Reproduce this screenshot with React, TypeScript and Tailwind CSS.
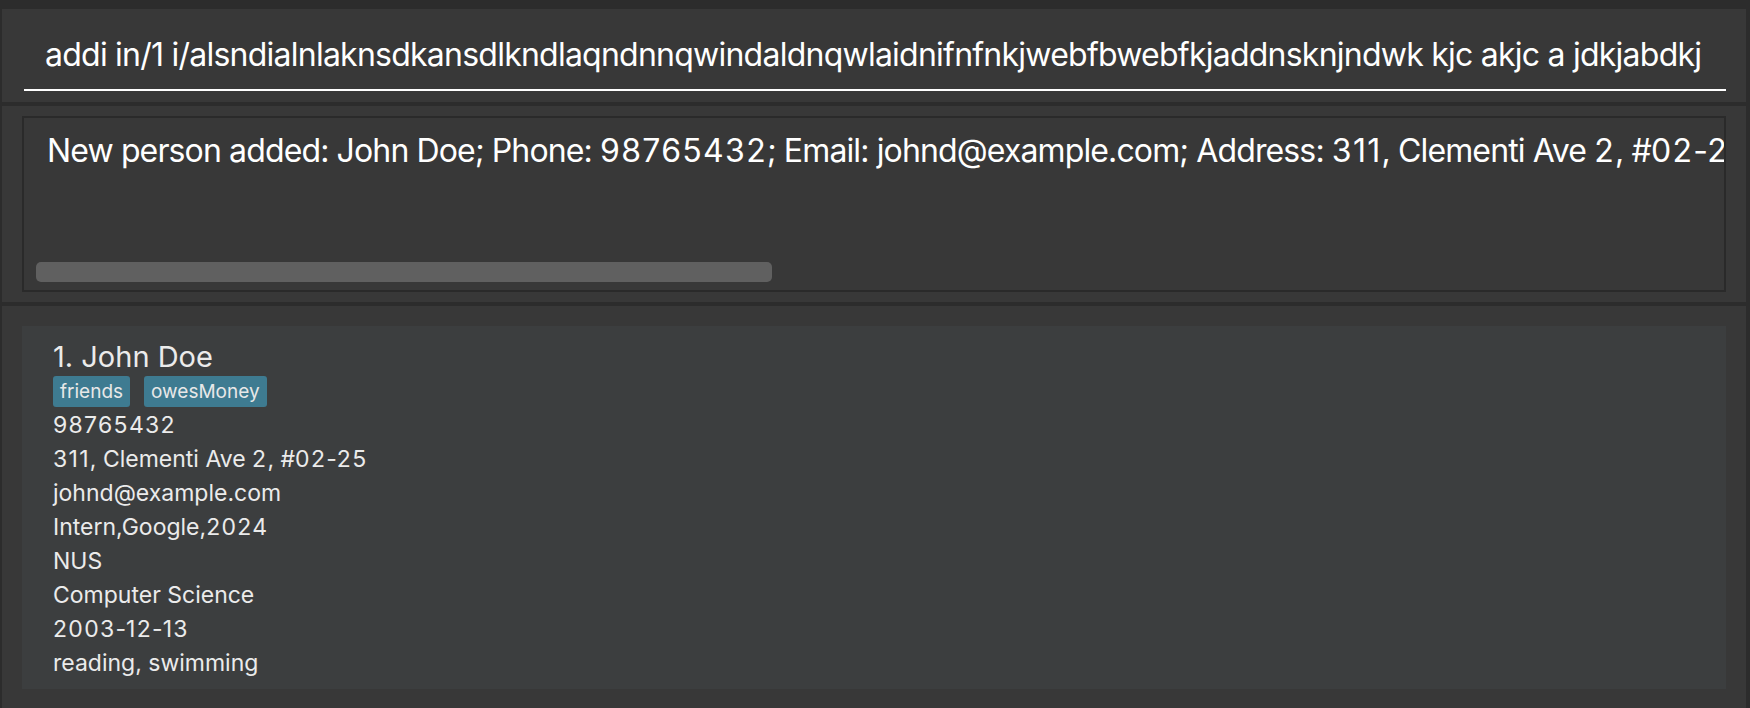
import React from 'react';

const command =
  'addi in/1 i/alsndialnlaknsdkansdlkndlaqndnnqwindaldnqwlaidnifnfnkjwebfbwebfkjaddnsknjndwk kjc akjc a jdkjabdkj';

const result =
  'New person added: John Doe; Phone: 98765432; Email: johnd@example.com; Address: 311, Clementi Ave 2, #02-25; Tags: [friends][owesMoney]';

const details = [
  '98765432',
  '311, Clementi Ave 2, #02-25',
  'johnd@example.com',
  'Intern,Google,2024',
  'NUS',
  'Computer Science',
  '2003-12-13',
  'reading, swimming',
];

const tags = ['friends', 'owesMoney'];

const font = { fontFamily: 'Inter, "Noto Sans", sans-serif' };

// digits in the original font run wider than Inter's
const WideDigits: React.FC<{ text: string }> = ({ text }) => (
  <>
    {text.split(/(\d+)/).map((part, i) =>
      /\d/.test(part) ? (
        <span key={i} className="tracking-[1.3px]">
          {part}
        </span>
      ) : (
        part
      )
    )}
  </>
);

const App: React.FC = () => {
  return (
    <div className="w-[1750px] h-[708px] overflow-hidden bg-[#2c2c2c] pt-[9px] pl-[2px] pr-[4px]" style={font}>
      {/* command box */}
      <div className="h-[93px] bg-[#383838] pl-[22px] pr-[20px] pt-[26px]">
        <div className="h-[56px] border-b-2 border-white pl-[21px] text-[32px] leading-[40px] text-white whitespace-nowrap overflow-hidden tracking-[-0.76px]">
          {command}
        </div>
      </div>

      {/* result display */}
      <div className="mt-[4px] h-[196px] bg-[#383838] pl-[20px] pr-[20px] pt-[10px]">
        <div className="relative h-[176px] border-2 border-[#2a2a2a] overflow-hidden">
          <div className="pl-[23px] pt-[13px] text-[32px] leading-[40px] text-white whitespace-nowrap tracking-[-0.87px]">
            <WideDigits text={result} />
          </div>
          <div className="absolute left-[12px] top-[144px] w-[736px] h-[20px] rounded-[5px] bg-[#606060]" />
        </div>
      </div>

      {/* person list */}
      <div className="mt-[4px] h-[402px] bg-[#383838] pl-[20px] pr-[20px] pt-[20px]">
        <div className="h-[363px] bg-[#3c3e3f] pl-[31px] pt-[13px] text-[#ebebeb]">
          <div className="text-[29px] leading-[36px]">1. John Doe</div>
          <div className="mt-[1px] flex gap-[14px]">
            {tags.map((t) => (
              <span
                key={t}
                className="h-[31px] px-[7px] rounded-[3px] bg-[#3e7b91] text-[19px] leading-[31px] text-[#e8e8e8]"
              >
                {t}
              </span>
            ))}
          </div>
          <div className="mt-[1px]">
            {details.map((d) => (
              <div key={d} className="text-[23px] leading-[34px]">
                <WideDigits text={d} />
              </div>
            ))}
          </div>
        </div>
      </div>
    </div>
  );
};

export default App;
